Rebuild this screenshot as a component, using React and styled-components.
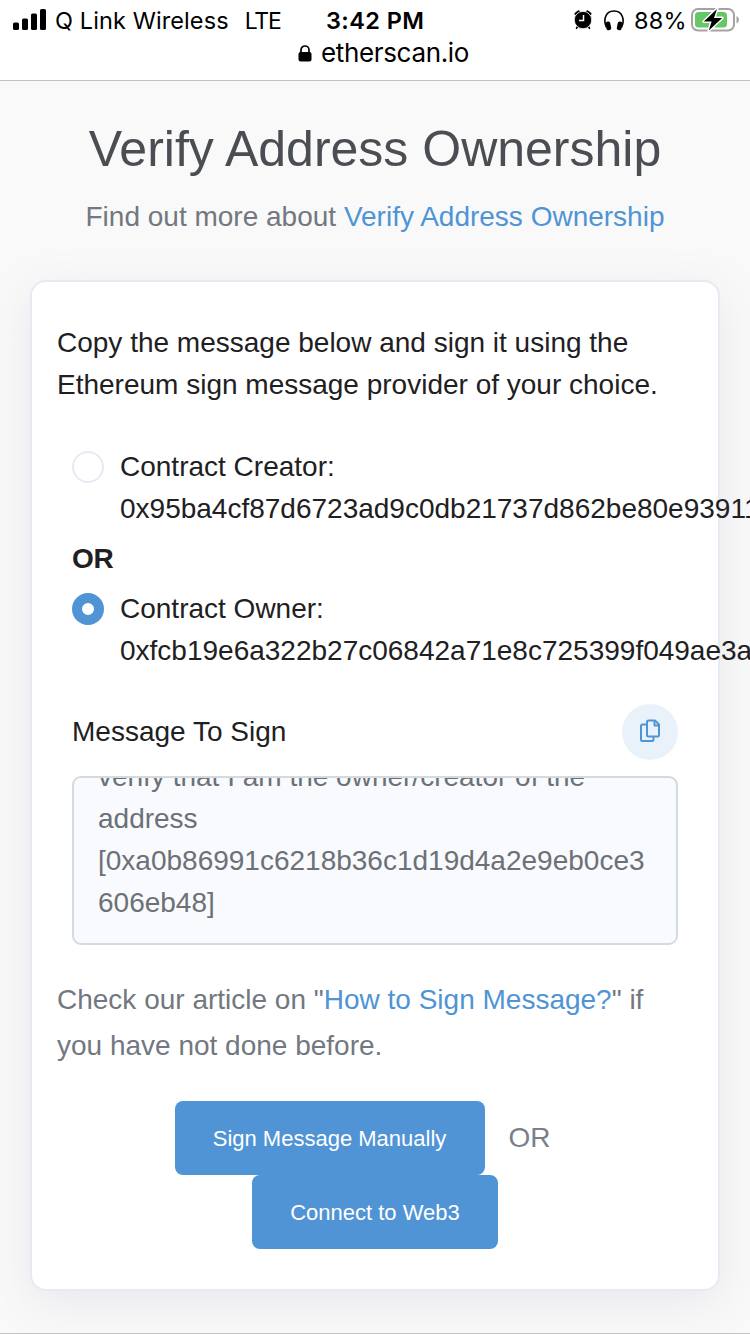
import React from "react";
import styled, { createGlobalStyle } from "styled-components";

const Global = createGlobalStyle`
  * { box-sizing: border-box; }
  html, body { margin: 0; padding: 0; overflow: hidden; }
  body { background: #f9f9f9; }
`;

const Page = styled.div`
  width: 750px;
  height: 1334px;
  display: flex;
  flex-direction: column;
  overflow: hidden;
  background: #f9f9f9;
  border-bottom: 1px solid #c3c3c5;
  color: #1e2022;
  font: 400 28px/42px "Liberation Sans", Arial, sans-serif;
`;

const BrowserBar = styled.header`
  height: 81px;
  flex: none;
  background: #fff;
  border-bottom: 1px solid #c0c0c1;
  color: #000;
  font-family: Inter, sans-serif;
`;

const StatusBar = styled.div`
  height: 40px;
  display: grid;
  grid-template-columns: 313px 122px 1fr;
  align-items: center;
  padding: 0 11px 0 13px;
  font-size: 23.5px;
  line-height: 36px;
  white-space: nowrap;
`;

const StatusGroup = styled.div`
  display: flex;
  align-items: center;
  justify-content: ${(p) => (p.$end ? "flex-end" : "flex-start")};
`;

const Carrier = styled.span`
  margin-left: 9px;
  margin-top: 2px;
  letter-spacing: 0.1px;
`;

const Network = styled.span`
  margin-left: 16px;
  margin-top: 2px;
  font-size: 23px;
  letter-spacing: -1.2px;
`;

const Clock = styled.span`
  margin-top: 2px;
  font-weight: 600;
  font-size: 23.5px;
  letter-spacing: 0.4px;
`;

const Percent = styled.span`
  margin: 2px 4px 0 10px;
  letter-spacing: 0.3px;
`;

const AddressLine = styled.div`
  display: flex;
  align-items: center;
  justify-content: center;
  gap: 9px;
  height: 26px;
  padding-left: 17px;
  font-size: 26px;
  line-height: 26px;
  letter-spacing: -0.35px;
`;

const Main = styled.main`
  flex: 1;
  min-height: 0;
  padding: 0 30px;
`;

const Title = styled.h1`
  margin: 38px 0 0;
  font-size: 50px;
  line-height: 60px;
  font-weight: 400;
  color: #4a4d52;
  text-align: center;
  white-space: nowrap;
`;

const Subtitle = styled.p`
  margin: 17px 0 0;
  color: #73777f;
  text-align: center;
`;

const Link = styled.a`
  color: #4f94d5;
  text-decoration: none;
`;

const Card = styled.section`
  margin-top: 42px;
  height: 1011px;
  padding: 40px 25px 0;
  background: #fff;
  border: 2px solid #e7eaf3;
  border-radius: 16px;
  box-shadow: 0 12px 44px rgba(140, 148, 170, 0.16);
`;

const Intro = styled.p`
  margin: 0;
  white-space: nowrap;
`;

const Form = styled.div`
  padding: 0 15px;
`;

const Option = styled.div`
  display: flex;
  gap: 16px;
  margin-top: ${(p) => p.$top}px;
  white-space: nowrap;
`;

const Radio = styled.span`
  flex: none;
  width: 32px;
  height: 32px;
  margin-top: 5px;
  border-radius: 50%;
  border: ${(p) => (p.$checked ? "10px solid #5094d5" : "2px solid #e7eaf3")};
  background: #fff;
`;

const Divider = styled.div`
  margin-top: 8px;
  font-weight: 700;
  letter-spacing: -0.3px;
`;

const MessageHead = styled.div`
  display: flex;
  align-items: center;
  justify-content: space-between;
  height: 56px;
  margin-top: 32px;
`;

const CopyButton = styled.button`
  display: flex;
  align-items: center;
  justify-content: center;
  width: 56px;
  height: 56px;
  padding: 0 0 2px;
  border: 0;
  border-radius: 50%;
  background: #e9f2fa;
`;

const MessageBox = styled.div`
  display: flex;
  flex-direction: column;
  justify-content: flex-end;
  height: 169px;
  margin-top: 16px;
  padding: 0 24px 19px;
  overflow: hidden;
  border: 2px solid #d5dae2;
  border-radius: 9px;
  background: #f8fafd;
  color: #6c7177;
  white-space: nowrap;
`;

const Help = styled.p`
  margin: 32px 0 0;
  line-height: 46px;
  color: #73777f;
  white-space: nowrap;
`;

const Actions = styled.div`
  display: flex;
  flex-direction: column;
  align-items: center;
  margin-top: 32px;
`;

const ActionRow = styled.div`
  display: flex;
  align-items: center;
  gap: 24px;
  padding-right: 25px;
  color: #7b7f89;
`;

const Button = styled.button`
  width: ${(p) => p.$width}px;
  height: 74px;
  padding: 2px 0 0;
  border: 0;
  border-radius: 8px;
  background: #5094d5;
  color: #fff;
  font: 400 22px/34px "Liberation Sans", Arial, sans-serif;
`;

const SignalIcon = () => (
  <svg width="33" height="22" viewBox="0 0 33 22">
    <rect x="0" y="13.5" width="6" height="7.5" rx="1.6" />
    <rect x="9" y="9.5" width="6" height="11.5" rx="1.6" />
    <rect x="18" y="4.500" width="6" height="16.500" rx="1.6" />
    <rect x="27" y="0" width="6" height="21" rx="1.6" />
  </svg>
);

const AlarmIcon = () => (
  <svg width="18" height="20" viewBox="0 0 18 20">
    <path d="M1.700 3.700 4.700 1.500M16.300 3.700 13.300 1.500" stroke="#000" strokeWidth="2.400" strokeLinecap="round" />
    <path d="m4 16-1.500 2.300M14 16l1.500 2.300" stroke="#000" strokeWidth="1.600" strokeLinecap="round" />
    <circle cx="9" cy="10" r="8.700" stroke="#fff" strokeWidth="0.800" />
    <path d="M9.500 5v5.500H5" fill="none" stroke="#fff" strokeWidth="1.500" />
  </svg>
);

const HeadphonesIcon = () => (
  <svg width="20" height="21" viewBox="0 0 20 21">
    <path d="M2.500 17.500C-.8 11 .8 1 10 1s10.800 10 7.500 16.500" fill="none" stroke="#000" strokeWidth="1.600" />
    <rect x="2" y="11.500" width="4.800" height="8.800" rx="2" transform="rotate(-12 4.400 16)" />
    <rect x="13.200" y="11.500" width="4.800" height="8.800" rx="2" transform="rotate(12 15.600 16)" />
  </svg>
);

const BatteryIcon = () => (
  <svg width="48" height="26" viewBox="0 0 48 26">
    <rect x="1" y="2" width="42" height="21.500" rx="6" fill="#fff" stroke="#a3a3a3" strokeWidth="2" />
    <path d="M45.500 9v7.500q2.500-1 2.500-3.750T45.500 9" fill="#a3a3a3" />
    <rect x="4" y="5" width="32" height="15.500" rx="3.500" fill="#65c766" />
    <path d="M26 2 12.800 14.500h7.800L17.800 23.500 31.200 11h-8.200z" fill="#000" stroke="#fff" strokeWidth="3" paintOrder="stroke" strokeLinejoin="round" />
  </svg>
);

const LockIcon = () => (
  <svg width="14" height="17" viewBox="0 0 14 17">
    <path d="M3 8V5a4 4 0 0 1 8 0v3" fill="none" stroke="#000" strokeWidth="1.700" />
    <rect x="0.500" y="7" width="13" height="9.500" rx="2" />
  </svg>
);

const CopyIcon = () => (
  <svg width="20" height="24" viewBox="0 0 20 24" fill="none" stroke="#5094d5" strokeWidth="2" strokeLinejoin="round">
    <path d="M6 5.500H2.500Q1 5.500 1 7V20.500Q1 22 2.500 22H12q1.500 0 1.500-1.500v-3" />
    <path d="M8.500 1.500h6.500l4 4V16q0 1.500-1.500 1.500h-9Q7 17.500 7 16V3q0-1.500 1.500-1.500Z" />
    <path d="M14.500 1.500v5H19" />
  </svg>
);

export default function App() {
  return (
    <Page>
      <Global />
      <BrowserBar>
        <StatusBar>
          <StatusGroup>
            <SignalIcon />
            <Carrier>Q Link Wireless</Carrier>
            <Network>LTE</Network>
          </StatusGroup>
          <Clock>3:42 PM</Clock>
          <StatusGroup $end>
            <AlarmIcon />
            <svg width="12" height="1" />
            <HeadphonesIcon />
            <Percent>88%</Percent>
            <BatteryIcon />
          </StatusGroup>
        </StatusBar>
        <AddressLine>
          <LockIcon />
          <span>etherscan.io</span>
        </AddressLine>
      </BrowserBar>
      <Main>
        <Title>Verify Address Ownership</Title>
        <Subtitle>
          Find out more about <Link>Verify Address Ownership</Link>
        </Subtitle>
        <Card>
          <Intro>
            Copy the message below and sign it using the
            <br />
            Ethereum sign message provider of your choice.
          </Intro>
          <Form>
            <Option $top={40}>
              <Radio />
              <div>
                Contract Creator:
                <br />
                0x95ba4cf87d6723ad9c0db21737d862be80e93911
              </div>
            </Option>
            <Divider>OR</Divider>
            <Option $top={8}>
              <Radio $checked />
              <div>
                Contract Owner:
                <br />
                0xfcb19e6a322b27c06842a71e8c725399f049ae3a
              </div>
            </Option>
            <MessageHead>
              <span>Message To Sign</span>
              <CopyButton aria-label="Copy message">
                <CopyIcon />
              </CopyButton>
            </MessageHead>
            <MessageBox>
              <span>verify that I am the owner/creator of the</span>
              <span>address</span>
              <span>[0xa0b86991c6218b36c1d19d4a2e9eb0ce3</span>
              <span>606eb48]</span>
            </MessageBox>
          </Form>
          <Help>
            Check our article on "<Link>How to Sign Message?</Link>" if
            <br />
            you have not done before.
          </Help>
          <Actions>
            <ActionRow>
              <Button $width={310}>Sign Message Manually</Button>
              <span>OR</span>
            </ActionRow>
            <Button $width={246}>Connect to Web3</Button>
          </Actions>
        </Card>
      </Main>
    </Page>
  );
}
